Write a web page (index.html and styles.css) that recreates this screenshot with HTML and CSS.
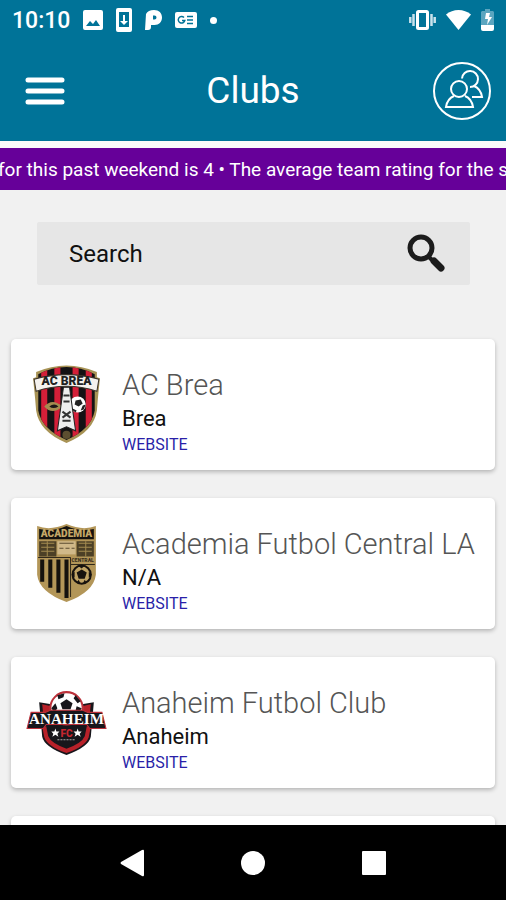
FILE: index.html
```html
<!DOCTYPE html>
<html lang="en">
<head>
    <meta charset="UTF-8">
    <meta name="viewport" content="width=device-width, initial-scale=1.0">
    <title>Clubs</title>
    <link rel="stylesheet" href="styles.css">
</head>
<body>
    <div class="status-bar">
        <span class="clock">10:10</span>
        <svg class="status-icon" width="20" height="20" viewBox="0 0 20 20">
            <path fill="#fff" fill-rule="evenodd" d="M2 0h16a2 2 0 0 1 2 2v16a2 2 0 0 1-2 2H2a2 2 0 0 1-2-2V2a2 2 0 0 1 2-2zM3 16h14l-4-6-3 4-3-3z"/>
        </svg>
        <svg class="status-icon" width="16" height="24" viewBox="0 0 16 24">
            <path fill="#fff" fill-rule="evenodd" d="M2 0h12a2 2 0 0 1 2 2v20a2 2 0 0 1-2 2H2a2 2 0 0 1-2-2V2a2 2 0 0 1 2-2zM3 4v15h10V4z"/>
            <path fill="#fff" d="M7 7h2v6h3l-4 4-4-4h3z"/>
        </svg>
        <svg class="status-icon" width="17" height="20" viewBox="0 0 17 20">
            <path fill="#fff" fill-rule="evenodd" d="M1 4Q3 0 9 0c5 0 8 3 8 7.500S14 15 9.500 15H6v2q0 3-3 3H0zM8 5.500v4h1.500a2 2 0 0 0 0-4z"/>
        </svg>
        <svg class="status-icon" width="22" height="16" viewBox="0 0 22 16">
            <rect width="22" height="16" rx="2" fill="#fff"/>
            <path fill="none" stroke="#007398" stroke-width="1.500" d="M9 5.500a3.300 3.300 0 1 0 .800 3H7M12 4.500h6M12 8h6M12 11.500h6"/>
        </svg>
        <span class="dot"></span>
        <span class="status-right">
            <svg width="27" height="20" viewBox="0 0 27 20">
                <rect x="8.500" y="1.500" width="10" height="17" rx="1" fill="none" stroke="#fff" stroke-width="3"/>
                <path stroke="#c8e2ec" stroke-width="2.500" d="M4.500 4v12M1.300 7v6M22.500 4v12M25.700 7v6"/>
            </svg>
            <svg width="25" height="20" viewBox="0 0 25 20">
                <path fill="#fff" d="M0 4.500C7-1.500 18-1.500 25 4.500L12.500 20z"/>
            </svg>
            <svg width="13" height="22" viewBox="0 0 13 22">
                <path fill="#5ba5bf" d="M4 0h5v2h3l1 1v13H0V3l1-1h3z"/>
                <path fill="#fff" d="M0 16h13v4a2 2 0 0 1-2 2H2a2 2 0 0 1-2-2zM5 4h4L8 8h3l-5 8 1-6H4z"/>
            </svg>
        </span>
    </div>

    <header>
        <button class="menu-btn" aria-label="Menu">
            <svg width="40" height="30" viewBox="0 0 40 30">
                <path stroke="#fff" stroke-width="5" stroke-linecap="round" d="M3 4h34M3 15h34M3 26h34"/>
            </svg>
        </button>
        <h1>Clubs</h1>
        <button class="users-btn" aria-label="Users">
            <svg width="58" height="58" viewBox="0 0 58 58" fill="none" stroke="#fff" stroke-width="2">
                <circle cx="29" cy="29" r="28"/>
                <circle cx="26" cy="27" r="8"/>
                <path d="M21 34c-5 2-7 5-8 11h27c-1-6-3-9-8-11"/>
                <path d="M29 16.500a8 8 0 1 1 8 8.500M41 24c5 2 7 5 8 11H39"/>
            </svg>
        </button>
    </header>

    <div class="ticker">
        <p>for this past weekend is 4 • The average team rating for the s</p>
    </div>

    <main>
        <form class="search-box">
            <input type="text" placeholder="Search" aria-label="Search">
            <button class="search-btn" type="button" aria-label="Find">
                <svg width="40" height="40" viewBox="0 0 40 40" fill="none" stroke="#1c1c1c">
                    <circle cx="15" cy="14" r="11" stroke-width="5"/>
                    <path stroke-width="4" d="M22 22l4 4"/>
                    <path stroke-width="7" stroke-linecap="round" d="M28 27l7 7"/>
                </svg>
            </button>
        </form>

        <div class="club-list">
            <div class="club-card">
                <svg class="club-logo" viewBox="0 0 80 80">
                    <defs>
                        <clipPath id="brea-shield"><path d="M12 10Q40-4 68 10v36Q64 65 40 75 16 65 12 46z"/></clipPath>
                    </defs>
                    <path fill="#a89355" d="M10 8Q40-5 70 8v5l3 1-2 20-1 12Q67 67 40 78 13 67 10 46L9 34 7 14l3-1z"/>
                    <g clip-path="url(#brea-shield)">
                        <rect width="80" height="80" fill="#141214"/>
                        <path stroke="#d41f38" stroke-width="6" d="M18 0v80M31 0v80M49 0v80M62 0v80"/>
                    </g>
                    <path fill="#a48c50" d="M18 42q8-9 18 0-10 9-18 0z"/>
                    <path fill="#1b1817" d="M23 42q5-4 9 0-5 3-9 0z"/>
                    <circle cx="51" cy="40" r="8" fill="#fff"/>
                    <path fill="#222" d="M49 36l5-1 2 4-4 3-4-2zM56 41l3-1-2 5-3 1zM46 44l4 2-1 2-4-3z"/>
                    <path fill="#eee" stroke="#222" stroke-width="1" d="M37 23h6l3 22 3 21-9-4-9 4 3-21z"/>
                    <path fill="none" stroke="#333" stroke-width="2" d="M37 31h6M37 37h6M36 47l8 6M44 47l-8 6M36 56h8"/>
                    <circle cx="40" cy="70" r="4" fill="#5c4e30"/>
                    <path fill="#f5f2ee" stroke="#3c342b" d="M8 15Q40 6 72 15l-2 12Q40 17 10 27z"/>
                    <text x="40" y="21" class="brea-text">AC BREA</text>
                </svg>
                <div class="club-info">
                    <h2>AC Brea</h2>
                    <p>Brea</p>
                    <a href="#">WEBSITE</a>
                </div>
            </div>

            <div class="club-card">
                <svg class="club-logo" viewBox="0 0 80 80">
                    <path fill="#b39658" d="M11 3q13 5 29-2 16 7 29 2v48Q67 68 40 78 13 68 11 51z"/>
                    <path fill="#15120e" d="M13 6q14 3 27-3 13 6 27 3v10H13z"/>
                    <text x="40" y="14" class="academia-text">ACADEMIA</text>
                    <path fill="#4c4026" d="M13 18h17v15H13zM50 18h17v15H50z"/>
                    <path stroke="#a28a50" d="M15 20h13M15 24h13M15 28h13M52 20h13M52 24h13M52 28h13M21 18v15M59 18v15"/>
                    <path fill="#d0b989" d="M31 18h18v13H31z"/>
                    <path stroke="#5c4d31" stroke-width="1" d="M33 20h14M33 25h4M39 25h4M45 25h3"/>
                    <text x="56" y="39" class="central-text">CENTRAL</text>
                    <path stroke="#15120e" stroke-width="4" d="M16 36v22M24 36v28M32 36v33M40 36v38"/>
                    <path stroke="#30281a" d="M12 34h32M44 34v39M44 41h24"/>
                    <circle cx="55" cy="51" r="9" fill="#c0a365" stroke="#17120e" stroke-width="2"/>
                    <path fill="#17120e" d="M55 46l5 3-2 6h-6l-2-6zM51 42h7l-3 3zM45 51l3-3v6zM65 51l-3-3v6zM50 59l2-3 2 4zM60 59l-2-3-2 4z"/>
                </svg>
                <div class="club-info">
                    <h2>Academia Futbol Central LA</h2>
                    <p>N/A</p>
                    <a href="#">WEBSITE</a>
                </div>
            </div>

            <div class="club-card">
                <svg class="club-logo" viewBox="0 0 80 80">
                    <path fill="#17161b" d="M13 20l12 2h30l12-2-3 34q-2 10-24 18-22-8-24-18z"/>
                    <path fill="none" stroke="#b82129" stroke-width="4" d="M18 44l2 10q3 8 20 14 17-6 20-14l2-10"/>
                    <path fill="#b82129" d="M16 22l9 2-3 8h-5zM64 22l-9 2 3 8h5z"/>
                    <circle cx="40" cy="26" r="16" fill="#fff" stroke="#bc313a" stroke-width="2"/>
                    <path fill="#17161b" d="M40 17l6 4-2 6h-8l-2-6zM31 13l7-2-1 4-5 2zM49 13l5 6-3 2-4-5zM25 26l4-5 2 5-3 4zM55 26l-3 5-3-3 1-4z"/>
                    <path fill="#17161b" stroke="#bc313a" d="M5 30h14l5-2h32l5 2h14l4 16H63l-3-4H20l-3 4H1z"/>
                    <text x="40" y="41" class="anaheim-text">ANAHEIM</text>
                    <text x="40" y="54" class="fc-text">FC</text>
                    <path fill="#fff" d="M29 46l1 3h3l-2 2 1 3-3-2-3 2 1-3-2-2h3zM51 46l1 3h3l-2 2 1 3-3-2-3 2 1-3-2-2h3z"/>
                    <path stroke="#aaa" stroke-dasharray="2 1" d="M31 57h18"/>
                </svg>
                <div class="club-info">
                    <h2>Anaheim Futbol Club</h2>
                    <p>Anaheim</p>
                    <a href="#">WEBSITE</a>
                </div>
            </div>

            <div class="club-card"></div>
        </div>
    </main>

    <nav>
        <button aria-label="Back">
            <svg width="24" height="28" viewBox="0 0 24 28"><path fill="#fff" d="M1 13L22 1q2-1 2 1v24q0 2-2 1L1 15q-1-1 0-2z"/></svg>
        </button>
        <button aria-label="Home">
            <svg width="24" height="24" viewBox="0 0 24 24"><circle cx="12" cy="12" r="12" fill="#fff"/></svg>
        </button>
        <button aria-label="Recent apps">
            <svg width="24" height="24" viewBox="0 0 24 24"><rect width="24" height="24" rx="1" fill="#fff"/></svg>
        </button>
    </nav>
</body>
</html>
```
FILE: styles.css
```css
* {
    box-sizing: border-box;
}

body {
    margin: 0;
    height: 100vh;
    display: flex;
    flex-direction: column;
    overflow: hidden;
    font-family: Roboto, sans-serif;
    background-color: #f1f1f1;
    color: #111;
}

h1, h2, p {
    margin: 0;
    font-weight: 400;
}

button {
    display: flex;
    padding: 0;
    border: none;
    background: none;
    cursor: pointer;
}

svg {
    display: block;
}

.status-bar {
    display: flex;
    flex-shrink: 0;
    align-items: center;
    gap: 13px;
    height: 40px;
    padding: 0 12px;
    background-color: #007398;
    color: #fff;
}

.clock {
    font-size: 23px;
    font-weight: 500;
}

.dot {
    width: 7px;
    height: 7px;
    border-radius: 50%;
    background-color: #fff;
}

.status-right {
    display: flex;
    align-items: center;
    gap: 10px;
    margin-left: auto;
}

header {
    display: grid;
    grid-template-columns: 1fr auto 1fr;
    flex-shrink: 0;
    align-items: center;
    height: 101px;
    padding: 0 15px;
    background-color: #007398;
    color: #fff;
}

header h1 {
    font-size: 37px;
}

.menu-btn {
    justify-self: start;
    margin-left: 10px;
}

.users-btn {
    justify-self: end;
}

.ticker {
    flex-shrink: 0;
    overflow: hidden;
    border-top: 7px solid #fafafa;
    background-color: #660099;
    color: #fff;
    white-space: nowrap;
}

.ticker p {
    margin-left: -2px;
    padding-top: 2px;
    font-size: 19px;
    line-height: 40px;
}

main {
    flex: 1;
    min-height: 0;
    overflow: hidden;
    padding-top: 32px;
}

.search-box {
    display: flex;
    align-items: center;
    margin: 0 36px 54px 37px;
    padding: 0 24px 0 32px;
    background-color: #e6e6e6;
    border-radius: 2px;
}

.search-box input {
    flex: 1;
    min-width: 0;
    height: 63px;
    padding: 0;
    border: none;
    outline: none;
    background: none;
    font-family: inherit;
    font-size: 24px;
    color: #111;
}

.search-box input::placeholder {
    color: #111;
    opacity: 1;
}

.club-list {
    display: flex;
    flex-direction: column;
    gap: 28px;
    padding: 0 11px;
}

.club-card {
    display: flex;
    align-items: center;
    gap: 15px;
    min-height: 131px;
    padding: 0 15px;
    background-color: #fff;
    border-radius: 5px;
    box-shadow: 0 2px 4px rgba(0, 0, 0, 0.25);
}

.club-logo {
    flex-shrink: 0;
    width: 81px;
    height: 81px;
}

.club-info {
    display: flex;
    flex-direction: column;
    align-items: flex-start;
    padding-top: 12px;
    white-space: nowrap;
}

.club-info h2 {
    font-size: 29px;
    font-weight: 300;
    line-height: 36px;
    color: #555;
}

.club-info p {
    font-size: 22px;
    line-height: 32px;
}

.club-info a {
    font-size: 16px;
    line-height: 20px;
    color: #2a1fa8;
    text-decoration: none;
}

.brea-text,
.academia-text,
.central-text,
.anaheim-text,
.fc-text {
    font-family: Roboto, sans-serif;
    font-weight: 900;
    text-anchor: middle;
}

.brea-text {
    font-size: 12px;
    fill: #222;
}

.academia-text {
    font-size: 10px;
    fill: #c5a968;
}

.central-text {
    font-size: 5px;
    fill: #3a301d;
}

.anaheim-text {
    font-family: "Liberation Serif", serif;
    font-size: 15px;
    fill: #fff;
}

.fc-text {
    font-size: 10px;
    fill: #c42730;
}

nav {
    display: flex;
    flex-shrink: 0;
    justify-content: center;
    align-items: center;
    gap: 97px;
    height: 75px;
    background-color: #000;
}
```
